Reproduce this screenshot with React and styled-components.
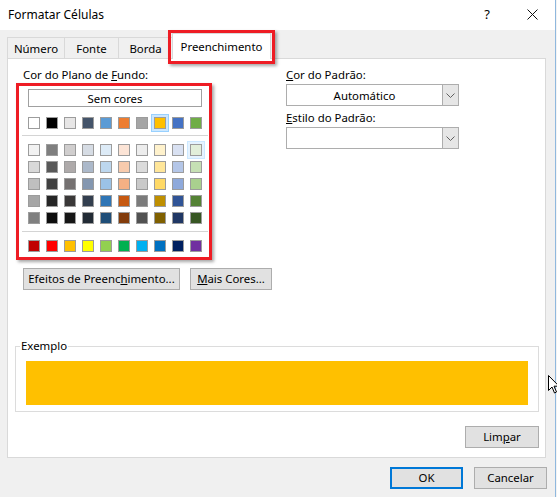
import React from "react";
import styled, { createGlobalStyle } from "styled-components";

const themeRow = ["#FFFFFF", "#000000", "#E7E6E6", "#44546A", "#5B9BD5", "#ED7D31", "#A5A5A5", "#FFC000", "#4472C4", "#70AD47"];
const shadeRows = [
  ["#F2F2F2", "#7F7F7F", "#D0CECE", "#D6DCE4", "#DDEBF7", "#FCE4D6", "#EDEDED", "#FFF2CC", "#D9E1F2", "#E2EFDA"],
  ["#D9D9D9", "#595959", "#AEAAAA", "#ACB9CA", "#BDD7EE", "#F8CBAD", "#DBDBDB", "#FFE699", "#B4C6E7", "#C6E0B4"],
  ["#BFBFBF", "#404040", "#757171", "#8497B0", "#9BC2E6", "#F4B084", "#C9C9C9", "#FFD966", "#8EA9DB", "#A9D08E"],
  ["#A6A6A6", "#262626", "#3A3838", "#333F4F", "#2F75B5", "#C65911", "#7B7B7B", "#BF8F00", "#305496", "#548235"],
  ["#808080", "#0D0D0D", "#161616", "#222B35", "#1F4E78", "#833C0C", "#525252", "#806000", "#203764", "#375623"],
];
const standardRow = ["#C00000", "#FF0000", "#FFC000", "#FFFF00", "#92D050", "#00B050", "#00B0F0", "#0070C0", "#002060", "#7030A0"];
const tabs = [
  { label: "Número", width: 58 },
  { label: "Fonte", width: 55 },
  { label: "Borda", width: 55 },
  { label: "Preenchimento", width: 99, active: true },
];

const GlobalStyle = createGlobalStyle`
  body {
    margin: 0;
    background: #f3f3f3;
    font-family: "Segoe UI", "Noto Sans", "Open Sans", sans-serif;
    font-size: 11.4px;
    color: #000;
  }
`;

const App = () => {
  return (
    <>
      <GlobalStyle />
      <Dialog>
        <TitleBar>
          <Title>Formatar Células</Title>
          <TitleButton>?</TitleButton>
          <TitleButton $close>
            <svg width="11" height="11" viewBox="0 0 11 11">
              <path d="M0.5 0.5 L10.5 10.5 M10.5 0.5 L0.5 10.5" stroke="#111" strokeWidth="1" />
            </svg>
          </TitleButton>
        </TitleBar>
        <Body>
          <TabRow>
            {tabs.map((t) => (
              <Tab key={t.label} $active={t.active} $width={t.width}>
                {t.label}
                {t.active && <TabHighlight />}
              </Tab>
            ))}
          </TabRow>
          <Panel>
            <TopSection>
              <Column>
                <Label $indent>
                  Cor do Plano de <u>F</u>undo:
                </Label>
                <Palette>
                  <NoColorButton>Sem cores</NoColorButton>
                  <SwatchRow>
                    {themeRow.map((c, i) => (
                      <Swatch key={i} $color={c} $state={i === 7 ? "selected" : ""} />
                    ))}
                  </SwatchRow>
                  <Divider />
                  <SwatchGrid>
                    {shadeRows.map((row, r) =>
                      row.map((c, i) => (
                        <Swatch key={`${r}-${i}`} $color={c} $state={r === 0 && i === 9 ? "hover" : ""} />
                      ))
                    )}
                  </SwatchGrid>
                  <Divider $gap={7} />
                  <SwatchRow>
                    {standardRow.map((c, i) => (
                      <Swatch key={i} $color={c} />
                    ))}
                  </SwatchRow>
                </Palette>
                <ButtonRow>
                  <Button $width={157}>
                    Efeitos de Preenc<u>h</u>imento...
                  </Button>
                  <Button $width={82}>
                    <u>M</u>ais Cores...
                  </Button>
                </ButtonRow>
              </Column>
              <Column $right>
                <Label>
                  <u>C</u>or do Padrão:
                </Label>
                <Select>
                  <SelectValue>Automático</SelectValue>
                  <SelectArrow>
                    <Chevron />
                  </SelectArrow>
                </Select>
                <Label $small>
                  <u>E</u>stilo do Padrão:
                </Label>
                <Select>
                  <SelectValue />
                  <SelectArrow>
                    <Chevron />
                  </SelectArrow>
                </Select>
              </Column>
            </TopSection>
            <SampleGroup>
              <GroupLabel>Exemplo</GroupLabel>
              <SampleFill $color="#FFC000" />
            </SampleGroup>
            <ClearRow>
              <Button $width={74}>
                Lim<u>p</u>ar
              </Button>
            </ClearRow>
          </Panel>
          <Footer>
            <Button $width={73} $default>
              OK
            </Button>
            <Button $width={73}>Cancelar</Button>
          </Footer>
        </Body>
        <Cursor />
      </Dialog>
    </>
  );
};

export default App;

const Chevron = () => (
  <svg width="9" height="5" viewBox="0 0 9 5">
    <path d="M0.5 0.5 L4.5 4.5 L8.5 0.5" fill="none" stroke="#606060" strokeWidth="1" />
  </svg>
);

const Cursor = () => (
  <CursorMark width="12" height="19" viewBox="0 0 12 19">
    <path d="M0.5 0.5 L0.5 15.5 L4 12 L6.5 18 L8.5 17 L6 11.2 L11 11.2 Z" fill="#fff" stroke="#000" strokeWidth="1" />
  </CursorMark>
);

const Dialog = styled.div`
  position: relative;
  width: 555px;
  height: 497px;
  background: #f0f0f0;
  border-right: 1px solid #8fb8de;
  display: flex;
  flex-direction: column;
`;
const TitleBar = styled.div`
  height: 30px;
  background: #fff;
  display: flex;
  align-items: center;
  padding-left: 8px;
  flex-shrink: 0;
`;
const Title = styled.span`
  flex: 1;
  font-size: 12px;
  margin-top: -1px;
`;
const TitleButton = styled.span`
  width: ${({ $close }) => ($close ? "46px" : "22px")};
  margin-right: ${({ $close }) => ($close ? "0" : "11px")};
  display: flex;
  justify-content: center;
  align-items: center;
  font-size: 13px;
  margin-top: -2px;
`;
const Body = styled.div`
  display: flex;
  flex-direction: column;
  padding: 0 9px 0 7px;
`;
const TabRow = styled.div`
  display: flex;
  align-items: flex-end;
  height: 29px;
  position: relative;
  z-index: 1;
`;
const Tab = styled.div`
  position: relative;
  width: ${({ $width }) => $width}px;
  height: ${({ $active }) => ($active ? "26px" : "22px")};
  display: flex;
  align-items: center;
  justify-content: center;
  box-sizing: border-box;
  white-space: nowrap;
  background: ${({ $active }) => ($active ? "#fff" : "#f0f0f0")};
  border: 1px solid #d9d9d9;
  border-bottom: ${({ $active }) => ($active ? "none" : "1px solid #d9d9d9")};
  margin-left: -1px;
  padding-bottom: ${({ $active }) => ($active ? "1px" : "0")};
  &:first-child {
    margin-left: 0;
  }
`;
const TabHighlight = styled.span`
  position: absolute;
  left: -5px;
  right: -5px;
  top: -4px;
  bottom: -5px;
  border: 3px solid #ee1c24;
  box-shadow: 2px 2px 3px rgba(0, 0, 0, 0.35);
`;
const Panel = styled.div`
  height: 400px;
  box-sizing: border-box;
  margin-top: -1px;
  background: #fff;
  border: 1px solid #d9d9d9;
  display: flex;
  flex-direction: column;
`;
const TopSection = styled.div`
  display: flex;
  padding: 8px 0 0 8px;
  gap: 74px;
  height: 279px;
  flex-shrink: 0;
`;
const Column = styled.div`
  display: flex;
  flex-direction: column;
  flex-shrink: 0;
  width: ${({ $right }) => ($right ? "173px" : "196px")};
`;
const Label = styled.div`
  line-height: 16px;
  height: 16px;
  white-space: nowrap;
  padding-left: ${({ $indent }) => ($indent ? "7px" : "0")};
  margin-top: ${({ $small }) => ($small ? "4px" : "0")};
`;
const Palette = styled.div`
  border: 3px solid #ee1c24;
  box-shadow: 2px 2px 3px rgba(0, 0, 0, 0.35);
  padding: 3px 7px 5px 9px;
  display: flex;
  flex-direction: column;
`;
const NoColorButton = styled.div`
  height: 18px;
  box-sizing: border-box;
  border: 1px solid #a0a0a0;
  display: flex;
  align-items: center;
  justify-content: center;
  margin-bottom: 10px;
`;
const SwatchRow = styled.div`
  display: flex;
  gap: 6px;
`;
const SwatchGrid = styled.div`
  display: grid;
  grid-template-columns: repeat(10, 12px);
  column-gap: 6px;
  row-gap: 5px;
`;
const Swatch = styled.span`
  width: 12px;
  height: 12px;
  box-sizing: border-box;
  background: ${({ $color }) => $color};
  border: 1px solid #9c9c9c;
  box-shadow: ${({ $state }) =>
    $state === "selected"
      ? "0 0 0 2px #cce8ff, 0 0 0 3px #99d1ff"
      : $state === "hover"
      ? "0 0 0 2px #e5f3ff, 0 0 0 3px #cce8ff"
      : "none"};
`;
const Divider = styled.div`
  height: 1px;
  background: #d4d4d4;
  margin: ${({ $gap }) => ($gap ? `${$gap}px` : "6px")} -6px 8px -6px;
`;
const ButtonRow = styled.div`
  display: flex;
  gap: 10px;
  margin-top: 8px;
  padding-left: 7px;
`;
const Button = styled.div`
  flex-shrink: 0;
  width: ${({ $width }) => $width}px;
  height: 22px;
  line-height: ${({ $default }) => ($default ? "18px" : "20px")};
  box-sizing: border-box;
  background: #e1e1e1;
  border: ${({ $default }) => ($default ? "2px solid #0078d7" : "1px solid #adadad")};
  text-align: center;
  white-space: nowrap;
`;
const Select = styled.div`
  height: 22px;
  box-sizing: border-box;
  border: 1px solid #adadad;
  display: flex;
  margin-top: 1px;
  background: #fff;
`;
const SelectValue = styled.div`
  flex: 1;
  display: flex;
  align-items: center;
  justify-content: center;
`;
const SelectArrow = styled.div`
  width: 17px;
  box-sizing: border-box;
  border: 1px solid #adadad;
  margin: -1px -1px -1px 0;
  background: #e6e6e6;
  display: flex;
  align-items: center;
  justify-content: center;
`;
const SampleGroup = styled.div`
  position: relative;
  margin: 0 6px 0 7px;
  height: 66px;
  box-sizing: border-box;
  border: 1px solid #dcdcdc;
  padding: 14px 10px 0 10px;
`;
const GroupLabel = styled.span`
  position: absolute;
  top: -9px;
  left: 4px;
  background: #fff;
  padding: 0 1px;
  line-height: 16px;
`;
const SampleFill = styled.div`
  height: 44px;
  background: ${({ $color }) => $color};
`;
const ClearRow = styled.div`
  display: flex;
  justify-content: flex-end;
  padding-right: 6px;
  margin-top: 14px;
`;
const Footer = styled.div`
  display: flex;
  justify-content: flex-end;
  gap: 11px;
  margin-top: 9px;
  margin-right: -1px;
`;
const CursorMark = styled.svg`
  position: absolute;
  left: 548px;
  top: 375px;
`;
